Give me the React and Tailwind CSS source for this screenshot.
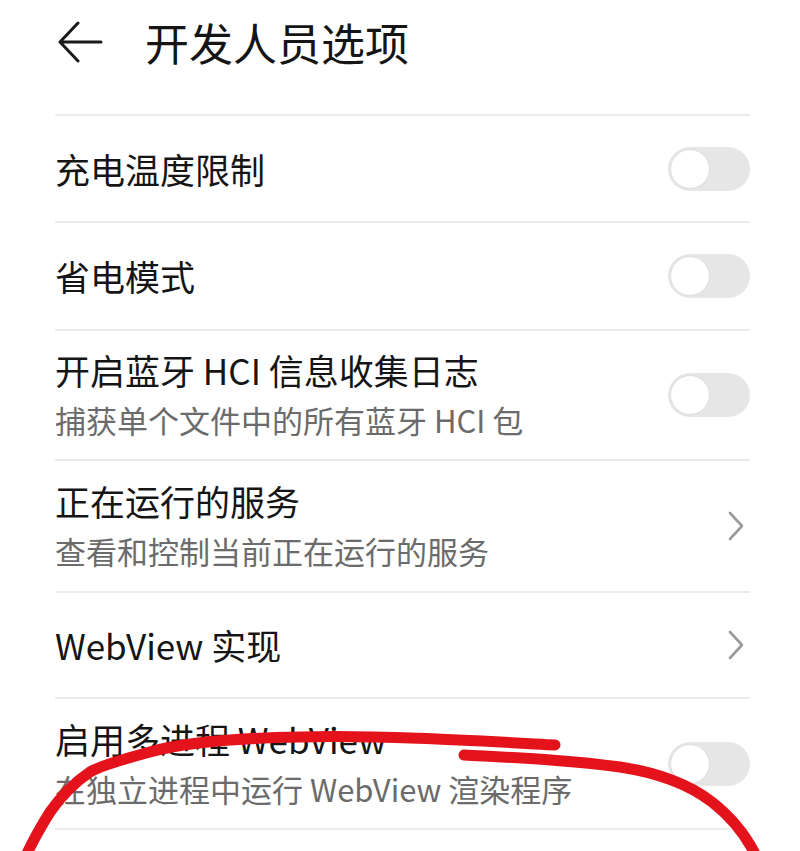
import React from 'react';

const Toggle = () => (
    <div className="relative w-[82px] h-[44px] rounded-full bg-[#e6e6e6] shrink-0">
        <div className="absolute left-[2px] top-[2px] w-[40px] h-[40px] rounded-full bg-white border border-[#dcdcdc]" />
    </div>
);

const Chevron = () => (
    <svg width="20" height="30" viewBox="0 0 20 30" className="shrink-0 mr-[4px]">
        <path d="M4 2 L16 15 L4 28" fill="none" stroke="#9a9a9a" strokeWidth="2.6" strokeLinecap="round" strokeLinejoin="round" />
    </svg>
);

const Row = ({ title, subtitle, right, height }) => (
    <div className={`flex items-center justify-between border-b-2 border-[#ebebeb] ${height}`}>
        <div className="flex flex-col">
            <div className="text-[35px] leading-[48px] text-[#151515]">{title}</div>
            {subtitle && <div className="text-[31px] leading-[48px] mt-[2px] text-[#6b6b6b]">{subtitle}</div>}
        </div>
        {right === 'toggle' ? <Toggle /> : <Chevron />}
    </div>
);

export default function App() {
    return (
        <div
            className="relative w-[800px] h-[851px] overflow-hidden bg-white"
            style={{ fontFamily: '"Noto Sans CJK SC", "Noto Sans", sans-serif' }}
        >
            {/* Header */}
            <div className="flex items-center h-[84px] pl-[57px]">
                <svg width="46" height="42" viewBox="0 0 46 42" className="shrink-0">
                    <path d="M44 21 H3 M21 2 L3 21 L21 40" fill="none" stroke="#1a1a1a" strokeWidth="3" strokeLinecap="round" strokeLinejoin="round" />
                </svg>
                <div className="ml-[42px] text-[44px] leading-[56px] text-[#151515]">开发人员选项</div>
            </div>

            <div className="mt-[30px] mx-[55px] mr-[50px] border-t-2 border-[#ebebeb]">
                <Row title="充电温度限制" right="toggle" height="h-[107px]" />
                <Row title="省电模式" right="toggle" height="h-[108px]" />
                <Row title="开启蓝牙 HCI 信息收集日志" subtitle="捕获单个文件中的所有蓝牙 HCI 包" right="toggle" height="h-[130px]" />
                <Row title="正在运行的服务" subtitle="查看和控制当前正在运行的服务" right="chevron" height="h-[132px]" />
                <Row title="WebView 实现" right="chevron" height="h-[106px]" />
                <Row title="启用多进程 WebView" subtitle="在独立进程中运行 WebView 渲染程序" right="toggle" height="h-[131px]" />
            </div>

            {/* red marker annotation */}
            <svg className="absolute inset-0 pointer-events-none" width="800" height="851" viewBox="0 0 800 851">
                <path
                    d="M555 745 C480 741 380 735 300 737 C240 738 185 742 150 752 C120 760 100 766 90 772 C75 782 62 795 50 812 C40 828 32 842 24 860"
                    fill="none"
                    stroke="#e3121b"
                    strokeWidth="11"
                    strokeLinecap="round"
                />
                <path
                    d="M464 755 C520 758 570 760 620 767 C660 773 690 785 712 802 C735 820 748 838 758 860"
                    fill="none"
                    stroke="#e3121b"
                    strokeWidth="11"
                    strokeLinecap="round"
                />
            </svg>
        </div>
    );
}
